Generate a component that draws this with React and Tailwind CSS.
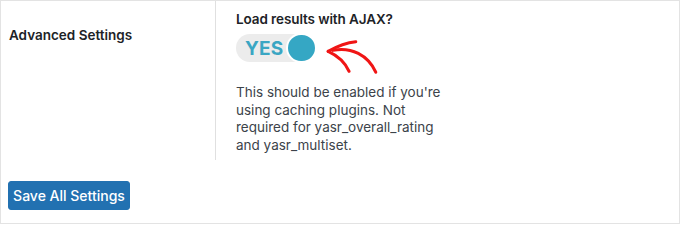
import React from 'react'

const font = { fontFamily: 'Inter, "Liberation Sans", Arial, sans-serif' }

function Toggle() {
  return (
    <div className="relative flex items-center w-[82px] h-[30px]">
      <div className="flex items-center h-[28px] w-[70px] rounded-full bg-[#ececec] pl-[9px]">
        <span className="text-[19px] font-bold text-[#3aa6c3] leading-none tracking-[0.2px]">YES</span>
      </div>
      <div className="absolute left-[50px] top-0 w-[31px] h-[30px] rounded-full bg-[#35a7c4] border-2 border-white" />
    </div>
  )
}

// hand drawn red arrow pointing at the switch
function Arrow() {
  return (
    <svg width="60" height="40" viewBox="320 36 60 42" className="absolute left-[320px] top-[36px]">
      <g fill="none" stroke="#f01515" strokeWidth="3.2" strokeLinecap="round">
        <path d="M326 51 C335 46 345 42 355 41" />
        <path d="M331 50 C350 46 368 55 376 73" />
        <path d="M326 51 C337 56 344 63 348 72" />
      </g>
    </svg>
  )
}

export default function App() {
  return (
    <div className="bg-white w-[680px] h-[226px]" style={font}>
      <div className="relative w-[680px] h-[224px] border border-[#e3e3e3] bg-white">
        <div className="flex h-[159px]">
          <div className="w-[215px] border-r border-[#e0e0e0] pl-[8px] pt-[21px]">
            <span className="text-[13.5px] leading-[20px] font-semibold text-[#1d2327]">Advanced Settings</span>
          </div>
          <div className="pl-[20px] pt-[8px]">
            <div className="text-[13.5px] leading-[20px] font-semibold text-[#1d2327] tracking-[-0.1px]">Load results with AJAX?</div>
            <div className="mt-[4px]">
              <Toggle />
            </div>
            <p className="mt-[21px] text-[13.5px] leading-[17.5px] text-[#3c434a] w-[225px]">
              This should be enabled if you're using caching plugins. Not required for yasr_overall_rating and yasr_multiset.
            </p>
          </div>
        </div>
        <div className="pl-[7px] pt-[21px]">
          <button className="h-[29px] w-[122px] rounded-[3px] bg-[#2271b1] text-white text-[14px] font-medium border border-[#2271b1]">
            Save All Settings
          </button>
        </div>
        <Arrow />
      </div>
    </div>
  )
}
